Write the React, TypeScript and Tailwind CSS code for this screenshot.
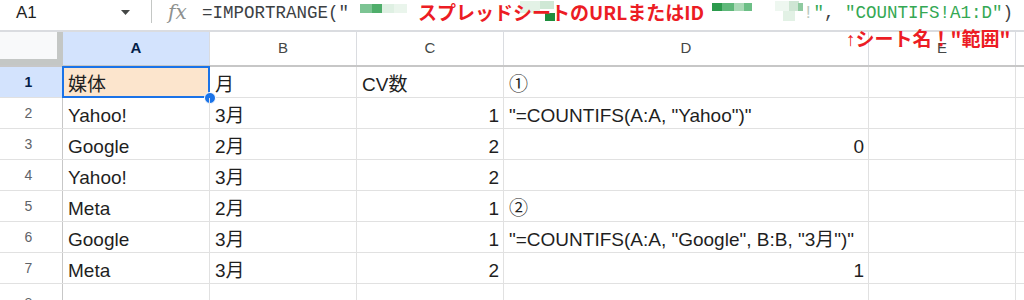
import React from "react";

const sans = "font-['Liberation_Sans','Noto_Sans_CJK_JP',sans-serif]";
const mono = "font-['Liberation_Mono',monospace]";

type Cell = { v: string; right?: boolean };

const rows: Cell[][] = [
  [{ v: "媒体" }, { v: "月" }, { v: "CV数" }, { v: "①" }],
  [{ v: "Yahoo!" }, { v: "3月" }, { v: "1", right: true }, { v: '"=COUNTIFS(A:A, "Yahoo")"' }],
  [{ v: "Google" }, { v: "2月" }, { v: "2", right: true }, { v: "0", right: true }],
  [{ v: "Yahoo!" }, { v: "3月" }, { v: "2", right: true }, { v: "" }],
  [{ v: "Meta" }, { v: "2月" }, { v: "1", right: true }, { v: "②" }],
  [{ v: "Google" }, { v: "3月" }, { v: "1", right: true }, { v: '"=COUNTIFS(A:A, "Google", B:B, "3月")"' }],
  [{ v: "Meta" }, { v: "3月" }, { v: "2", right: true }, { v: "1", right: true }],
];

const widths = ["w-[147px]", "w-[147px]", "w-[147px]", "w-[365px]", "w-[147px]"];

// pixelated blur hiding the spreadsheet URL
const blocks: [number, number, number, number, string][] = [
  [11, 3, 12, 9, "#7cc493"],
  [23, 3, 10, 9, "#4fae6b"],
  [33, 3, 12, 9, "#dff0e3"],
  [45, 3, 13, 9, "#eaf5ec"],
  [171, 0, 20, 12, "#e3f2e6"],
  [191, 0, 14, 8, "#cfe8d5"],
  [196, 12, 10, 8, "#1e8e3e"],
  [363, 2, 10, 8, "#2b9a4c"],
  [373, 2, 12, 8, "#5fb87a"],
  [385, 2, 10, 8, "#a9d9b6"],
  [395, 2, 8, 8, "#6cbf86"],
  [426, 0, 14, 10, "#eef7f0"],
  [440, 0, 10, 10, "#cfe6d4"],
  [434, 10, 12, 10, "#e2f1e5"],
  [449, 2, 5, 8, "#8fcaa0"],
];

function Mosaic() {
  return (
    <span className="relative inline-flex w-[454px] h-[24px] align-top">
      <svg width="454" height="24" className="absolute inset-0">
        {blocks.map(([x, y, w, h, c], i) => (
          <rect key={i} x={x} y={y} width={w} height={h} fill={c} />
        ))}
      </svg>
      <span className="relative pl-[69px] -mt-px whitespace-nowrap font-['Noto_Sans_CJK_JP',sans-serif] font-bold text-[19px] leading-[24px] text-[#ec1c24]">
        スプレッドシートのURLまたはID
      </span>
    </span>
  );
}

export default function App() {
  return (
    <div className={`relative w-[1024px] h-[300px] overflow-hidden bg-white ${sans}`}>
      {/* formula bar */}
      <div className="flex h-[32px] border-b-2 border-[#dadce0]">
        <div className="flex items-start w-[151px] pt-[3px] pl-[16px] pr-[21px]">
          <span className="text-[17px] leading-[20px] text-[#1f1f1f] flex-1">A1</span>
          <svg width="9" height="5" viewBox="0 0 9 5" className="mt-[7px]">
            <path d="M0 0h9L4.5 5z" fill="#444746" />
          </svg>
        </div>
        <div className="w-px h-[23px] bg-[#c4c7c5]" />
        <div className="w-[50px] pl-[16px] pt-[1px] font-['DejaVu_Serif',serif] italic text-[20px] leading-[22px] text-[#8e918f]">
          fx
        </div>
        <div className={`${mono} text-[17.5px] leading-[24px] whitespace-nowrap text-[#3c4043] pt-[1px]`}>
          <span>=IMPORTRANGE("</span>
          <Mosaic />
          <span className="text-[#b9c9bd]">!</span>
          <span className="text-[#34a853]">"</span>
          <span>, </span>
          <span className="text-[#34a853]">"COUNTIFS!A1:D"</span>
          <span>)</span>
        </div>
      </div>

      {/* column headers */}
      <div className="flex h-[35px] border-b-2 border-[#c7c7c7] text-[15px] text-[#444746]">
        <div className="w-[63px] border-r-[6px] border-b-[6px] border-[#c4c7c5] bg-[#f8f9fa]" />
        {["A", "B", "C", "D", "E"].map((c, i) => (
          <div
            key={c}
            className={`${widths[i]} flex items-center justify-center border-r border-[#dadce0] ${
              i === 0 ? "bg-[#d3e3fd] font-bold text-[#041e49]" : ""
            }`}
          >
            {c}
          </div>
        ))}
        <div className="flex-1" />
      </div>

      {/* rows */}
      {rows.map((r, ri) => (
        <div key={ri} className="flex h-[31px] border-b border-[#e1e1e1]">
          <div
            className={`w-[63px] pr-[5px] flex items-center justify-center border-r border-[#c7c7c7] text-[14px] ${
              ri === 0 ? "bg-[#d3e3fd] font-bold text-[#041e49]" : "text-[#5f6368]"
            }`}
          >
            {ri + 1}
          </div>
          {r.map((c, ci) => (
            <div
              key={ci}
              className={`${widths[ci]} relative flex items-end pb-[3px] whitespace-nowrap border-r border-[#e1e1e1] text-[19px] leading-none text-[#1f1f1f] ${
                c.right ? "justify-end pr-[4px]" : "pl-[5px]"
              } ${ri === 0 && ci === 0 ? "bg-[#fce5cd]" : ""}`}
            >
              {c.v}
              {ri === 0 && ci === 0 && (
                <>
                  <div className="absolute -left-px -top-px -right-px -bottom-px border-2 border-[#1a73e8]" />
                  <div className="absolute -right-[7px] -bottom-[7px] w-[12px] h-[12px] rounded-full bg-[#1a73e8] border border-white" />
                </>
              )}
            </div>
          ))}
          <div className={`${widths[4]} border-r border-[#e1e1e1]`} />
          <div className="flex-1" />
        </div>
      ))}
      <div className="flex h-[31px]">
        <div className="w-[63px] pr-[5px] flex justify-center pt-[9px] border-r border-[#c7c7c7] text-[14px] text-[#5f6368]">
          8
        </div>
        {widths.map((w, i) => (
          <div key={i} className={`${w} border-r border-[#e1e1e1]`} />
        ))}
      </div>

      {/* annotation */}
      <div className="absolute left-[846px] top-[26px] whitespace-nowrap font-['Noto_Sans_CJK_JP',sans-serif] font-bold text-[19px] leading-[24px] text-[#ec1c24]">
        <span className="font-['Liberation_Sans',sans-serif] font-normal">↑</span>シート名！"範囲"
      </div>
    </div>
  );
}
